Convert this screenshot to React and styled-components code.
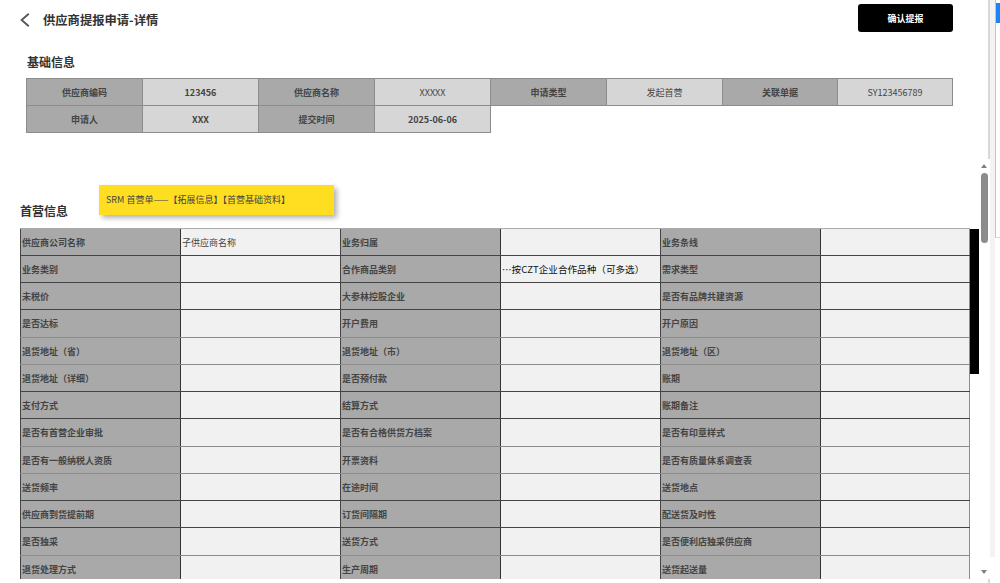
import React from 'react';
import styled, { createGlobalStyle } from 'styled-components';

const basicRows = [
  [
    ['供应商编码', '123456', true],
    ['供应商名称', 'XXXXX', false],
    ['申请类型', '发起首营', false],
    ['关联单据', 'SY123456789', false],
  ],
  [
    ['申请人', 'XXX', true],
    ['提交时间', '2025-06-06', true],
  ],
];

const rows = [
  ['供应商公司名称', '子供应商名称', '业务归属', '', '业务条线', ''],
  ['业务类别', '', '合作商品类别', '…按CZT企业合作品种（可多选）', '需求类型', ''],
  ['未税价', '', '大参林控股企业', '', '是否有品牌共建资源', ''],
  ['是否达标', '', '开户费用', '', '开户原因', ''],
  ['退货地址（省）', '', '退货地址（市）', '', '退货地址（区）', ''],
  ['退货地址（详细）', '', '是否预付款', '', '账期', ''],
  ['支付方式', '', '结算方式', '', '账期备注', ''],
  ['是否有首营企业审批', '', '是否有合格供货方档案', '', '是否有印章样式', ''],
  ['是否有一般纳税人资质', '', '开票资料', '', '是否有质量体系调查表', ''],
  ['送货频率', '', '在途时间', '', '送货地点', ''],
  ['供应商到货提前期', '', '订货间隔期', '', '配送货及时性', ''],
  ['是否独采', '', '送货方式', '', '是否便利店独采供应商', ''],
  ['退货处理方式', '', '生产周期', '', '送货起送量', ''],
];

// rows whose bottom line looks lighter in the screenshot
const lightRows = [3, 4, 7, 8, 11];

export default function App() {
  return (
    <Page>
      <GlobalStyle />
      <Main>
        <Header>
          <BackTitle>
            <svg width="10" height="14" viewBox="0 0 10 14" fill="none">
              <path d="M8.8 0.8 L1.6 7 L8.8 13.2" stroke="#555" strokeWidth="1.8" />
            </svg>
            <PageTitle>供应商提报申请-详情</PageTitle>
          </BackTitle>
          <ConfirmButton>确认提报</ConfirmButton>
        </Header>

        <BasicTitle>基础信息</BasicTitle>
        <BasicGrid>
          {basicRows.flat().map(([label, value, bold]) => (
            <React.Fragment key={label}>
              <BasicLabel>{label}</BasicLabel>
              <BasicValue $bold={bold}>{value}</BasicValue>
            </React.Fragment>
          ))}
        </BasicGrid>

        <SectionHead>
          <SectionTitle>首营信息</SectionTitle>
          <Note>SRM 首营单——【拓展信息】【首营基础资料】</Note>
        </SectionHead>

        <TableArea>
          <DetailTable>
            {rows.map((row, i) => (
              <DetailRow key={row[0]} $light={lightRows.includes(i)}>
                {row.map((text, j) =>
                  j % 2 === 0 ? (
                    <LabelCell key={j}>{text}</LabelCell>
                  ) : (
                    <ValueCell key={j} $big={i === 1 && j === 3}>{text}</ValueCell>
                  )
                )}
              </DetailRow>
            ))}
          </DetailTable>
          <BlackBar />
        </TableArea>
      </Main>

      <InnerScroll>
        <ArrowUp />
        <InnerThumb />
        <ArrowDown />
      </InnerScroll>

      <OuterScroll>
        <EdgeColumn>
          <EdgeLine $h={159} />
          <EdgeLine $h={4} />
        </EdgeColumn>
        <Band />
        <ThumbPanel>
          <OuterThumb />
        </ThumbPanel>
      </OuterScroll>
    </Page>
  );
}

const GlobalStyle = createGlobalStyle`
  html, body {
    margin: 0;
    padding: 0;
    background: #fff;
    overflow: hidden;
  }
  body {
    font-family: "Noto Sans CJK SC", "Noto Sans", sans-serif;
  }
`;

const Page = styled.div`
  width: 1000px;
  height: 583px;
  display: flex;
  overflow: hidden;
  background: #fff;
`;

const Main = styled.div`
  width: 979px;
  height: 583px;
  flex: none;
  overflow: hidden;
`;

const Header = styled.div`
  height: 34px;
  padding: 4px 26px 0 20px;
  display: flex;
  justify-content: space-between;
  align-items: flex-start;
`;

const BackTitle = styled.div`
  height: 31px;
  display: flex;
  align-items: center;
  gap: 13px;
`;

const PageTitle = styled.span`
  font-size: 12.3px;
  font-weight: 700;
  color: #333;
`;

const ConfirmButton = styled.button`
  width: 95px;
  height: 28px;
  padding: 0;
  border: 0;
  border-radius: 3px;
  background: #000;
  color: #fff;
  font-family: inherit;
  font-size: 9px;
  font-weight: 700;
`;

const BasicTitle = styled.div`
  margin: 14px 0 0 27px;
  height: 20px;
  line-height: 20px;
  font-size: 12px;
  font-weight: 700;
  color: #333;
`;

const BasicGrid = styled.div`
  margin: 6px 0 0 26px;
  width: 926px;
  display: grid;
  grid-template-columns: repeat(6, 116px) 115px 115px;
  grid-auto-rows: 27px;
`;

const BasicLabel = styled.div`
  display: flex;
  align-items: center;
  justify-content: center;
  background: #a9a9a9;
  border: 1px solid #8c8c8c;
  margin: 0 -1px -1px 0;
  font-size: 9px;
  font-weight: 700;
  color: #444;
`;

const BasicValue = styled.div`
  display: flex;
  align-items: center;
  justify-content: center;
  background: #d6d6d6;
  border: 1px solid #8c8c8c;
  margin: 0 -1px -1px 0;
  font-size: 9px;
  font-weight: ${(p) => (p.$bold ? 700 : 400)};
  color: #444;
`;

const SectionHead = styled.div`
  position: relative;
  height: 95.5px;
`;

const SectionTitle = styled.div`
  position: absolute;
  left: 20px;
  top: 69px;
  height: 20px;
  line-height: 20px;
  font-size: 12px;
  font-weight: 700;
  color: #333;
`;

const Note = styled.div`
  position: absolute;
  left: 99px;
  top: 53px;
  width: 235px;
  height: 30px;
  padding-left: 7px;
  box-sizing: border-box;
  line-height: 29px;
  background: #ffde21;
  box-shadow: 3px 3px 5px rgba(0, 0, 0, 0.3);
  font-size: 9px;
  color: #444;
`;

const TableArea = styled.div`
  margin-left: 20px;
  height: 351.5px;
  overflow: hidden;
  display: flex;
  align-items: flex-start;
`;

const DetailTable = styled.div`
  width: 950px;
  flex: none;
  border-top: 1px solid #aaa;
`;

const DetailRow = styled.div`
  display: grid;
  grid-template-columns: repeat(5, 160px) 150px;
  height: 27.25px;
  box-sizing: border-box;
  border-bottom: 1px solid ${(p) => (p.$light ? '#8c8c8c' : '#444')};
`;

const LabelCell = styled.div`
  display: flex;
  align-items: center;
  padding: 1px 0 0 1px;
  background: #a9a9a9;
  border-left: 1px solid #444;
  font-size: 9px;
  font-weight: 700;
  color: #444;
  white-space: nowrap;
`;

const ValueCell = styled.div`
  display: flex;
  align-items: center;
  padding: 1px 0 0 1px;
  background: #f1f1f1;
  border-left: 1px solid #333;
  font-size: ${(p) => (p.$big ? '9.6px' : '9px')};
  color: ${(p) => (p.$big ? '#111' : '#444')};
  white-space: nowrap;
  &:last-child {
    border-right: 1px solid #8c8c8c;
  }
`;

const BlackBar = styled.div`
  width: 9px;
  height: 145px;
  margin-top: 1px;
  flex: none;
  background: #000;
`;

const InnerScroll = styled.div`
  width: 9px;
  height: 583px;
  flex: none;
  box-sizing: border-box;
  padding: 164px 0 9px 2px;
  display: flex;
  flex-direction: column;
`;

const ArrowUp = styled.div`
  width: 0;
  height: 0;
  border-left: 3.5px solid transparent;
  border-right: 3.5px solid transparent;
  border-bottom: 4px solid #808080;
`;

const ArrowDown = styled.div`
  width: 0;
  height: 0;
  margin-top: auto;
  border-left: 3.5px solid transparent;
  border-right: 3.5px solid transparent;
  border-top: 4px solid #808080;
`;

const InnerThumb = styled.div`
  width: 7px;
  height: 70px;
  margin-top: 5px;
  border-radius: 4px;
  background: #8c8c8c;
`;

const OuterScroll = styled.div`
  width: 12px;
  height: 583px;
  flex: none;
  display: flex;
  align-items: flex-start;
`;

const EdgeColumn = styled.div`
  width: 2px;
  height: 583px;
  flex: none;
  display: flex;
  flex-direction: column;
  justify-content: space-between;
`;

const EdgeLine = styled.div`
  height: ${(p) => p.$h}px;
  background: #d8d8d8;
`;

const Band = styled.div`
  width: 5px;
  height: 557px;
  flex: none;
  background: #f3f3f3;
`;

const ThumbPanel = styled.div`
  width: 5px;
  height: 238px;
  flex: none;
  box-sizing: border-box;
  padding-top: 3px;
  border-left: 1px solid #c4c4c4;
  border-bottom: 1px solid #d8d8d8;
`;

const OuterThumb = styled.div`
  width: 4px;
  height: 20px;
  background: #1a86f5;
`;
